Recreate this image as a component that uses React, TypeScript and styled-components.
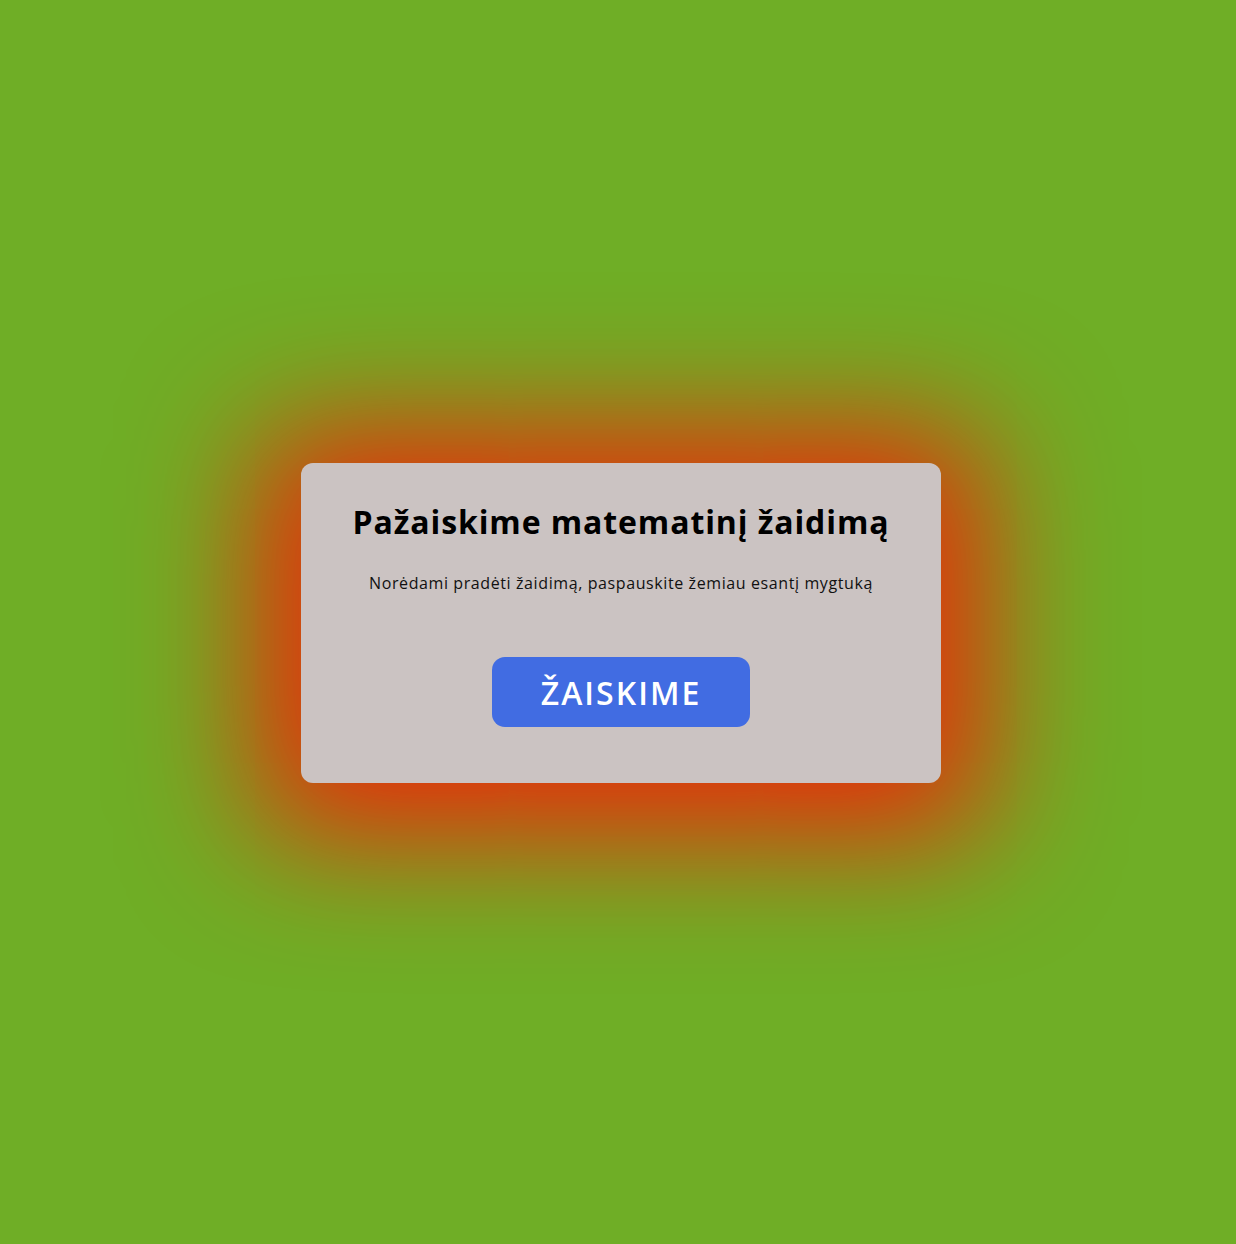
import React from "react";
import styled, { createGlobalStyle } from "styled-components";

const Global = createGlobalStyle`
  html, body { margin: 0; padding: 0; }
  body {
    background: #6fae26;
    font-family: "Open Sans", "Noto Sans", "Liberation Sans", sans-serif;
  }
`;

const Page = styled.main`
  min-height: 100vh;
  display: flex;
  align-items: center;
  justify-content: center;
`;

const Card = styled.section`
  width: 640px;
  height: 320px;
  box-sizing: border-box;
  padding: 39px 40px 56px;
  background: #cbc3c2;
  border-radius: 12px;
  box-shadow: 0 10px 130px 45px #ec2a0a;
  display: flex;
  flex-direction: column;
  align-items: center;
  transform: translate(3px, 1px);
`;

const Title = styled.h1`
  margin: 0;
  font-size: 32px;
  line-height: 40px;
  font-weight: 700;
  color: #000;
  letter-spacing: 0.9px;
`;

const Lead = styled.p`
  margin: 31px 0 0;
  font-size: 16px;
  line-height: 20px;
  color: #111;
  letter-spacing: 0.6px;
`;

const PlayButton = styled.button`
  margin-top: 64px;
  width: 258px;
  height: 70px;
  border: none;
  border-radius: 13px;
  background: #416ce2;
  color: #fff;
  font-family: inherit;
  font-size: 32px;
  font-weight: 600;
  letter-spacing: 2px;
  cursor: pointer;
`;

export default function App() {
  return (
    <>
      <Global />
      <Page>
        <Card>
          <Title>Pažaiskime matematinį žaidimą</Title>
          <Lead>Norėdami pradėti žaidimą, paspauskite žemiau esantį mygtuką</Lead>
          <PlayButton>ŽAISKIME</PlayButton>
        </Card>
      </Page>
    </>
  );
}
